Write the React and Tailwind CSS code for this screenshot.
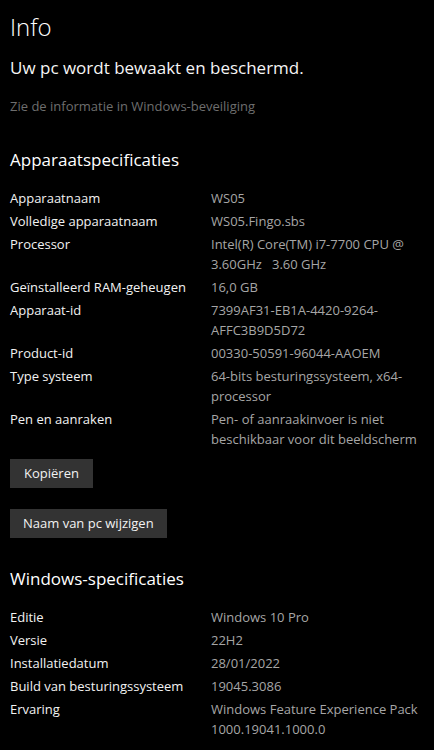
import React from "react";

const deviceSpecs = [
  ["Apparaatnaam", "WS05"],
  ["Volledige apparaatnaam", "WS05.Fingo.sbs"],
  ["Processor", "Intel(R) Core(TM) i7-7700 CPU @\n3.60GHz   3.60 GHz"],
  ["Geïnstalleerd RAM-geheugen", "16,0 GB"],
  ["Apparaat-id", "7399AF31-EB1A-4420-9264-\nAFFC3B9D5D72"],
  ["Product-id", "00330-50591-96044-AAOEM"],
  ["Type systeem", "64-bits besturingssysteem, x64-\nprocessor"],
  ["Pen en aanraken", "Pen- of aanraakinvoer is niet\nbeschikbaar voor dit beeldscherm"],
];

const windowsSpecs = [
  ["Editie", "Windows 10 Pro"],
  ["Versie", "22H2"],
  ["Installatiedatum", "28/01/2022"],
  ["Build van besturingssysteem", "19045.3086"],
  ["Ervaring", "Windows Feature Experience Pack\n1000.19041.1000.0"],
];

// one label/value row, value may span two lines
const SpecRow = ({ label, value }) => (
  <div className="flex text-[13px] leading-[20px]">
    <div className="w-[201px] shrink-0 text-[#f2f2f2]">{label}</div>
    <div className="whitespace-pre text-[#a6a6a6]">{value}</div>
  </div>
);

export default function App() {
  return (
    <div
      className="min-h-[750px] w-[434px] bg-black pl-[10px] pt-[10px] text-white"
      style={{ fontFamily: '"Open Sans", "Noto Sans", sans-serif' }}
    >
      <h1 className="text-[24px] font-light leading-[34px]">Info</h1>

      <p className="mt-[12px] text-[17px] leading-[24px] text-[#f5f5f5]">
        Uw pc wordt bewaakt en beschermd.
      </p>
      <p className="mt-[16px] text-[13px] leading-[20px] text-[#6e6e6e]">
        Zie de informatie in Windows-beveiliging
      </p>

      <h2 className="mt-[31px] text-[17px] leading-[26px]">Apparaatspecificaties</h2>

      <div className="mt-[15px] flex flex-col gap-[3px]">
        {deviceSpecs.map(([label, value]) => (
          <SpecRow key={label} label={label} value={value} />
        ))}
      </div>

      <button className="mt-[10px] block h-[29px] bg-[#333333] px-[14px] text-[13px] text-[#f2f2f2]">
        Kopiëren
      </button>
      <button className="mt-[21px] block h-[29px] bg-[#333333] px-[13px] text-[13px] text-[#f2f2f2]">
        Naam van pc wijzigen
      </button>

      <h2 className="mt-[28px] text-[17px] leading-[26px]">Windows-specificaties</h2>

      <div className="mt-[15px] flex flex-col gap-[3px] pb-4">
        {windowsSpecs.map(([label, value]) => (
          <SpecRow key={label} label={label} value={value} />
        ))}
      </div>
    </div>
  );
}
